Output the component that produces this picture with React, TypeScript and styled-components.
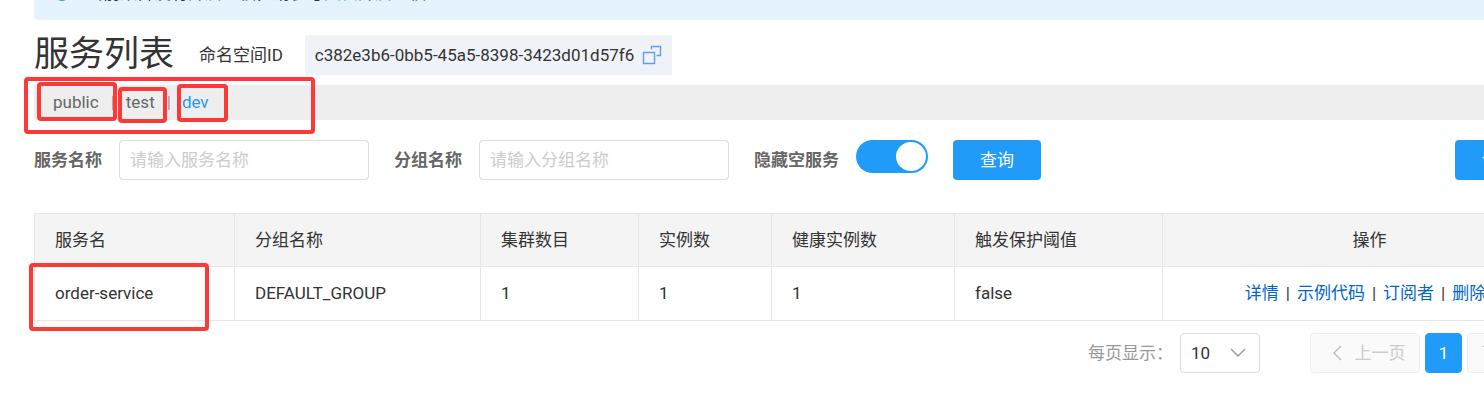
import React from 'react';
import styled, { createGlobalStyle, css } from 'styled-components';

const GlobalStyle = createGlobalStyle`
  *, *::before, *::after { box-sizing: border-box; }
  html { overflow-x: hidden; }
  body {
    margin: 0;
    background: #fff;
    color: #333;
    font-family: Roboto, "Noto Sans CJK SC", sans-serif;
    font-size: 17px;
    line-height: 24px;
  }
  button, input, select { font: inherit; }
`;

const Page = styled.main`
  min-width: 1611px;
  padding: 0 34px 40px;
`;

const NoticeClip = styled.div`
  display: flex;
  align-items: flex-end;
  height: 20px;
  overflow: hidden;
`;

const Notice = styled.div`
  display: flex;
  flex: 1;
  align-items: center;
  gap: 16px;
  padding: 15px 20px;
  border-radius: 4px;
  background: #e4f3fe;
  color: #333;
  svg { flex: none; }
`;

const NoticeText = styled.p`
  margin: 0;
  a { color: #209bfa; text-decoration: none; }
`;

const Heading = styled.header`
  display: flex;
  align-items: center;
  margin-top: 15px;
  height: 40px;
`;

const Title = styled.h1`
  margin: 0 25px 0 0;
  font-size: 35px;
  font-weight: 400;
  line-height: 40px;
`;

const NamespaceLabel = styled.span`
  margin-right: 22px;
`;

const NamespaceId = styled.div`
  display: flex;
  align-items: center;
  gap: 8px;
  height: 40px;
  padding: 0 10px;
  background: #eff3f8;
`;

const IconButton = styled.button`
  display: flex;
  padding: 0;
  border: 0;
  background: none;
`;

const NamespaceBar = styled.nav`
  position: relative;
  display: flex;
  align-items: center;
  margin-top: 10px;
  height: 35px;
  padding: 0 19px 2px;
  background: #eee;
  color: #999;
`;

const NamespaceLink = styled.a<{ $active?: boolean }>`
  color: ${p => (p.$active ? '#209bfa' : '#666')};
  text-decoration: none;
`;

const Divider = styled.span`
  margin: 0 11px 0 12px;
`;

const Mark = styled.span<{ $x: number; $y: number; $w: number; $h: number }>`
  position: absolute;
  left: ${p => p.$x}px;
  top: ${p => p.$y}px;
  width: ${p => p.$w}px;
  height: ${p => p.$h}px;
  border: 4px solid #fd3837;
  border-radius: 4px;
  pointer-events: none;
`;

const Filters = styled.form`
  display: flex;
  align-items: center;
  margin-top: 20px;
  height: 40px;
`;

const Label = styled.label`
  margin-right: 17px;
  color: #666;
  font-weight: 700;
`;

const TextInput = styled.input`
  width: 250px;
  height: 40px;
  margin-right: 25px;
  padding: 0 10px;
  border: 1px solid #ddd;
  border-radius: 4px;
  background: #fff;
  color: #333;
  &::placeholder { color: #ccc; }
`;

const Toggle = styled.input`
  appearance: none;
  display: flex;
  align-self: flex-start;
  justify-content: flex-end;
  width: 72px;
  height: 33px;
  margin: 0 25px 0 0;
  padding: 2px;
  border-radius: 17px;
  background: #209bfa;
  &::before {
    content: '';
    width: 30px;
    height: 29px;
    border-radius: 50%;
    background: #fff;
  }
`;

const PrimaryButton = styled.button<{ $end?: boolean }>`
  height: 40px;
  padding: 0 27px;
  border: 0;
  border-radius: 4px;
  background: #209bfa;
  color: #fff;
  ${p => p.$end && css`margin-left: auto;`}
`;

const Table = styled.table`
  width: 100%;
  margin-top: 33px;
  border-collapse: collapse;
  table-layout: fixed;
  th, td {
    position: relative;
    padding: 14px 20px;
    border: 1px solid #e6e6e6;
    font-weight: 400;
    text-align: left;
  }
  th { background: #f4f4f4; }
  td { padding-bottom: 15px; }
  th:last-child, td:last-child { text-align: center; white-space: nowrap; }
  td:last-child { padding-right: 28px; }
`;

const Action = styled.a`
  color: #06c;
  text-decoration: none;
`;

const Separator = styled.span`
  margin: 0 7px;
`;

const Footer = styled.footer`
  display: flex;
  align-items: center;
  justify-content: flex-end;
  margin-top: 12px;
  height: 40px;
`;

const SizeLabel = styled.label`
  margin-right: 7px;
  color: #999;
`;

const SelectBox = styled.span`
  display: grid;
  align-items: center;
  width: 80px;
  height: 40px;
  margin-right: 50px;
  > * { grid-area: 1 / 1; }
  svg { justify-self: end; margin-right: 14px; pointer-events: none; }
`;

const SizeSelect = styled.select`
  appearance: none;
  width: 80px;
  height: 40px;
  padding: 0 10px;
  border: 1px solid #ddd;
  border-radius: 4px;
  background: #fff;
  color: #333;
`;

const Pager = styled.div`
  display: flex;
  gap: 5px;
`;

const PageButton = styled.button<{ $kind: 'prev' | 'current' | 'next' }>`
  display: flex;
  align-items: center;
  justify-content: center;
  gap: 12px;
  width: 110px;
  height: 40px;
  padding: ${p => (p.$kind === 'prev' ? '0 0 0 8px' : '0 8px 0 0')};
  border: 1px solid #eee;
  border-radius: 4px;
  background: #fafafa;
  color: #ccc;
  ${p => p.$kind === 'current' && css`
    width: 37px;
    padding: 0;
    border-color: #209bfa;
    background: #209bfa;
    color: #fff;
  `}
`;

const Chevron = ({ d, w, h, color }: { d: string; w: number; h: number; color: string }) => (
  <svg width={w} height={h} viewBox={`0 0 ${w} ${h}`} fill="none" stroke={color} strokeWidth="1.4" aria-hidden="true">
    <path d={d} />
  </svg>
);

const columns = [
  { name: '服务名', width: 200 },
  { name: '分组名称', width: 246 },
  { name: '集群数目', width: 158 },
  { name: '实例数', width: 133 },
  { name: '健康实例数', width: 183 },
  { name: '触发保护阈值', width: 208 },
  { name: '操作', width: 0 },
];

const actions = ['详情', '示例代码', '订阅者', '删除'];

export default function App() {
  return (
    <>
      <GlobalStyle />
      <Page>
        <NoticeClip>
          <Notice>
            <svg width="16" height="16" viewBox="0 0 16 16" aria-hidden="true">
              <circle cx="8" cy="8" r="7" fill="none" stroke="#4a90ff" strokeWidth="2" />
              <path d="M8 4v1.6M8 7v5" stroke="#4a90ff" strokeWidth="1.6" />
            </svg>
            <NoticeText>当前集群没有开启鉴权，请参考<a href="#docs">文档</a>开启鉴权~</NoticeText>
          </Notice>
        </NoticeClip>
        <Heading>
          <Title>服务列表</Title>
          <NamespaceLabel>命名空间ID</NamespaceLabel>
          <NamespaceId>
            c382e3b6-0bb5-45a5-8398-3423d01d57f6
            <IconButton type="button" aria-label="复制">
              <svg width="20" height="20" viewBox="0 0 20 20" fill="none" stroke="#5c9dff" strokeWidth="1.4">
                <path d="M1.5 7.5h11v11h-11zM9.5 4.5v-3h9v9h-4" />
              </svg>
            </IconButton>
          </NamespaceId>
        </Heading>
        <NamespaceBar>
          <NamespaceLink href="#public">public</NamespaceLink>
          <Divider>|</Divider>
          <NamespaceLink href="#test">test</NamespaceLink>
          <Divider>|</Divider>
          <NamespaceLink href="#dev" $active>dev</NamespaceLink>
          <Mark $x={-10} $y={-8} $w={291} $h={57} />
          <Mark $x={3} $y={-3} $w={80} $h={39} />
          <Mark $x={84} $y={2} $w={49} $h={36} />
          <Mark $x={143} $y={-1} $w={51} $h={38} />
        </NamespaceBar>
        <Filters onSubmit={e => e.preventDefault()}>
          <Label htmlFor="service">服务名称</Label>
          <TextInput id="service" placeholder="请输入服务名称" />
          <Label htmlFor="group">分组名称</Label>
          <TextInput id="group" placeholder="请输入分组名称" />
          <Label htmlFor="hideEmpty">隐藏空服务</Label>
          <Toggle id="hideEmpty" type="checkbox" role="switch" defaultChecked />
          <PrimaryButton type="submit">查询</PrimaryButton>
          <PrimaryButton type="button" $end>创建服务</PrimaryButton>
        </Filters>
        <Table>
          <colgroup>
            {columns.map(c => <col key={c.name} width={c.width || undefined} />)}
          </colgroup>
          <thead>
            <tr>{columns.map(c => <th key={c.name} scope="col">{c.name}</th>)}</tr>
          </thead>
          <tbody>
            <tr>
              <td>order-service<Mark $x={-6} $y={-4} $w={180} $h={68} /></td>
              <td>DEFAULT_GROUP</td>
              <td>1</td>
              <td>1</td>
              <td>1</td>
              <td>false</td>
              <td>
                {actions.map((a, i) => (
                  <React.Fragment key={a}>
                    {i > 0 && <Separator>|</Separator>}
                    <Action href="#action">{a}</Action>
                  </React.Fragment>
                ))}
              </td>
            </tr>
          </tbody>
        </Table>
        <Footer>
          <SizeLabel htmlFor="size">每页显示：</SizeLabel>
          <SelectBox>
            <SizeSelect id="size" defaultValue="10">
              <option>10</option>
              <option>20</option>
            </SizeSelect>
            <Chevron d="M1 1l7 7 7-7" w={16} h={10} color="#999" />
          </SelectBox>
          <Pager>
            <PageButton type="button" $kind="prev" disabled>
              <Chevron d="M8 1L1 8l7 7" w={10} h={16} color="#bbb" />上一页
            </PageButton>
            <PageButton type="button" $kind="current">1</PageButton>
            <PageButton type="button" $kind="next" disabled>
              下一页<Chevron d="M1 1l7 7-7 7" w={10} h={16} color="#bbb" />
            </PageButton>
          </Pager>
        </Footer>
      </Page>
    </>
  );
}
